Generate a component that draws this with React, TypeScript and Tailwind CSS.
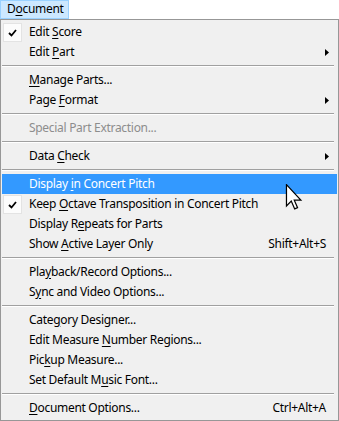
import React from "react";

type Item =
  | { sep: true }
  | {
      sep?: false;
      label: React.ReactNode;
      checked?: boolean;
      disabled?: boolean;
      active?: boolean;
      sub?: boolean;
      keys?: string;
    };

const U = ({ children }: { children: React.ReactNode }) => <span className="underline underline-offset-[2px]">{children}</span>;

const items: Item[] = [
  { label: <>Edit <U>S</U>core</>, checked: true },
  { label: <>Edit <U>P</U>art</>, sub: true },
  { sep: true },
  { label: <><U>M</U>anage Parts...</> },
  { label: <>Page <U>F</U>ormat</>, sub: true },
  { sep: true },
  { label: <>Special Part Extraction...</>, disabled: true },
  { sep: true },
  { label: <>Data <U>C</U>heck</>, sub: true },
  { sep: true },
  { label: <>Display <U>i</U>n Concert Pitch</>, active: true },
  { label: <>Keep <U>O</U>ctave Transposition in Concert Pitch</>, checked: true },
  { label: <>Display R<U>e</U>peats for Parts</> },
  { label: <>Show <U>A</U>ctive Layer Only</>, keys: "Shift+Alt+S" },
  { sep: true },
  { label: <>Pla<U>y</U>back/Record Options...</> },
  { label: <>S<U>y</U>nc and Video Options...</> },
  { sep: true },
  { label: <>Cate<U>g</U>ory Designer...</> },
  { label: <>Edit Measure <U>N</U>umber Regions...</> },
  { label: <>Pic<U>k</U>up Measure...</> },
  { label: <>Set Default M<U>u</U>sic Font...</> },
  { sep: true },
  { label: <><U>D</U>ocument Options...</>, keys: "Ctrl+Alt+A" },
];

function Check() {
  return (
    <div className="absolute left-[1px] top-[1px] w-[19px] h-[19px] bg-[#fcfcfc] border border-[#e3e3e3] flex items-center justify-center">
      <svg width="9" height="8" viewBox="0 0 9 8">
        <path d="M1 4 L3.5 6.5 L8 1" fill="none" stroke="#000" strokeWidth="1.8" />
      </svg>
    </div>
  );
}

function Arrow() {
  return (
    <svg width="4" height="7" viewBox="0 0 4 7" className="absolute right-[8px] top-[7px]">
      <path d="M0 0 L4 3.5 L0 7 Z" fill="#000" />
    </svg>
  );
}

export default function App() {
  return (
    <div className="w-[339px] h-[421px] bg-white relative overflow-hidden text-[12px] tracking-[-0.3px] text-black" style={{ fontFamily: '"Noto Sans", sans-serif' }}>
      <div className="h-[19px]">
        <div className="h-[19px] w-[69px] bg-[#cce8ff] border border-[#99d1ff] pl-[6px] leading-[16px]">
          D<U>o</U>cument
        </div>
      </div>
      <div className="w-[339px] h-[402px] border border-[#979797] bg-[#f0f0f0] py-[2px] px-[1px]">
        {items.map((it, i) =>
          it.sep ? (
            <div key={i} className="h-[8px] pt-[3px] pr-[3px]">
              <div className="h-[1px] bg-[#a0a0a0]" />
              <div className="h-[1px] bg-white" />
            </div>
          ) : (
            <div
              key={i}
              className={
                "relative h-[20px] flex items-center pl-[27px] pr-[11px] " +
                (it.active ? "bg-[#3399ff] text-white " : "") +
                (it.disabled ? "text-[#8d8d8d] " : "")
              }
            >
              {it.checked && <Check />}
              <span className="flex-1 whitespace-nowrap">{it.label}</span>
              {it.keys && <span className="whitespace-nowrap">{it.keys}</span>}
              {it.sub && <Arrow />}
            </div>
          )
        )}
      </div>
      <svg width="18" height="26" viewBox="0 0 12 19" className="absolute left-[285px] top-[184px]">
        <path d="M0.5 0.5 L0.5 16 L4 12.5 L6.5 18.2 L8.6 17.3 L6.2 11.8 L11 11.8 Z" fill="#fff" stroke="#000" strokeWidth="0.9" strokeLinejoin="miter" />
      </svg>
    </div>
  );
}
